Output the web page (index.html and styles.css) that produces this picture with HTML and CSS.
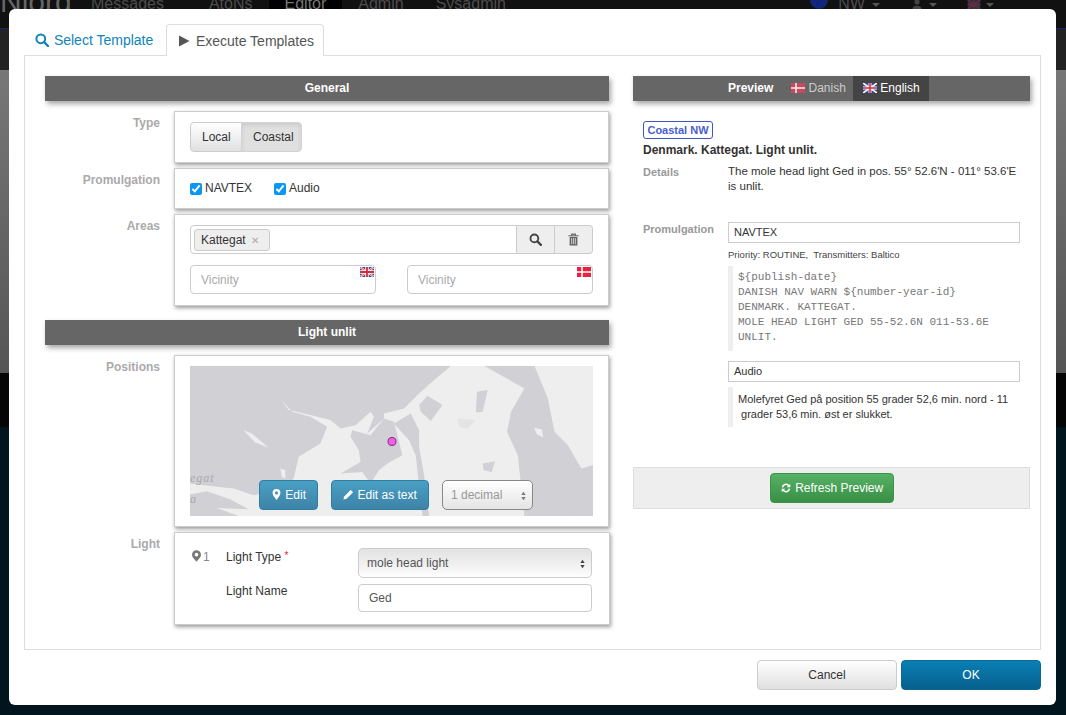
FILE: index.html
```html
<!DOCTYPE html>
<html lang="en">
<head>
    <meta charset="UTF-8">
    <title>Niord - Execute Templates</title>
    <link rel="stylesheet" href="styles.css">
</head>
<body>
    <div class="backdrop">
        <div class="topbar">
            <span class="brand">Niord</span>
            <span class="nav-item nav-messages">Messages</span>
            <span class="nav-item">AtoNs</span>
            <span class="nav-item nav-active">Editor</span>
            <span class="nav-item">Admin</span>
            <span class="nav-item">Sysadmin</span>
            <span class="nav-right">
                <i class="nav-dot"></i><span class="nav-item">NW</span><i class="caret"></i>
                <svg class="nav-user" viewBox="0 0 14 14"><circle cx="7" cy="3" r="4" fill="#444"/><path d="M0 14c0-4 3-5 7-5s7 1 7 5z" fill="#444"/></svg><i class="caret"></i>
                <svg class="nav-flag" viewBox="0 0 14 10"><rect width="14" height="10" fill="#2b2d4d"/><path d="M0 0l14 10M14 0L0 10M7 0v10M0 5h14" stroke="#5c3038" stroke-width="2"/></svg><i class="caret"></i>
            </span>
        </div>
        <div class="strip-dark"></div>
        <div class="strip-grey"></div>
        <div class="strip-black"></div>
    </div>

    <div class="modal">
        <div class="tabs">
            <a class="tab">
                <svg class="icon tab-icon" viewBox="0 0 14 14"><circle cx="5.8" cy="5.8" r="4.4" fill="none" stroke="#0f84b8" stroke-width="2"/><path d="M9 9l4 4" stroke="#0f84b8" stroke-width="2.4" stroke-linecap="round"/></svg>
                Select Template
            </a>
            <a class="tab tab-active">
                <svg class="icon tab-icon" viewBox="0 0 12 12"><path d="M1 0.5l10.5 5.5L1 11.5z" fill="#555"/></svg>
                Execute Templates
            </a>
        </div>

        <div class="tab-content">
            <div class="col-left">
                <div class="section-head">General</div>

                <div class="form-row row-type">
                    <label class="row-label">Type</label>
                    <div class="card">
                        <div class="btn-group">
                            <button class="btn btn-default">Local</button>
                            <button class="btn btn-default btn-pressed">Coastal</button>
                        </div>
                    </div>
                </div>

                <div class="form-row">
                    <label class="row-label">Promulgation</label>
                    <div class="card card-checks">
                        <label class="check"><input type="checkbox" checked>NAVTEX</label>
                        <label class="check"><input type="checkbox" checked>Audio</label>
                    </div>
                </div>

                <div class="form-row">
                    <label class="row-label row-label-areas">Areas</label>
                    <div class="card card-areas">
                        <div class="input-group">
                            <div class="tag-input"><span class="tag">Kattegat <span class="tag-x">&#10005;</span></span></div>
                            <span class="addon">
                                <svg class="icon" viewBox="0 0 14 14"><circle cx="5.8" cy="5.8" r="4.2" fill="none" stroke="#444" stroke-width="2"/><path d="M9 9l3.8 3.8" stroke="#444" stroke-width="2.4" stroke-linecap="round"/></svg>
                            </span>
                            <span class="addon">
                                <svg class="icon" viewBox="0 0 14 14"><path d="M1.5 3h11M5 3V1.2h4V3" fill="none" stroke="#666" stroke-width="1.2"/><path d="M2.8 4.2h8.4v9.3H2.8z" fill="#666"/><path d="M5 5.5v6.5M7 5.5v6.5M9 5.5v6.5" stroke="#eee" stroke-width="0.8"/></svg>
                            </span>
                        </div>
                        <div class="vicinity-row">
                            <div class="vicinity">
                                <input class="text-input" placeholder="Vicinity">
                                <svg class="corner-flag" viewBox="0 0 14 10"><rect width="14" height="10" fill="#2a4a9c"/><path d="M0 0l14 10M14 0L0 10" stroke="#fff" stroke-width="2"/><path d="M0 0l14 10M14 0L0 10" stroke="#d8283c" stroke-width="0.8"/><path d="M7 0v10M0 5h14" stroke="#fff" stroke-width="3.4"/><path d="M7 0v10M0 5h14" stroke="#d8283c" stroke-width="1.8"/></svg>
                            </div>
                            <div class="vicinity">
                                <input class="text-input" placeholder="Vicinity">
                                <svg class="corner-flag" viewBox="0 0 14 10"><rect width="14" height="10" fill="#ef1f3e"/><path d="M5 0v10M0 5h14" stroke="#fff" stroke-width="1.6"/></svg>
                            </div>
                        </div>
                    </div>
                </div>

                <div class="section-head section-light">Light unlit</div>

                <div class="form-row">
                    <label class="row-label row-label-pos">Positions</label>
                    <div class="card card-map">
                        <div class="map">
                            <svg class="map-svg" viewBox="60 33 1205 449" preserveAspectRatio="none">
                                <rect x="60" y="33" width="1205" height="449" fill="#d0d0d5"/>
                                <path fill="#eeeeef" d="M330 130 L355 165 L420 180 L480 195 L510 220 L555 210 L600 170 L610 185 L590 235 L640 190 L640 175 L700 160 L745 115 L790 75 L840 33 L940 33 L1060 100 L1020 170 L1008 230 L1040 300 L1060 482 L60 482 L60 385 L120 392 L190 400 L250 420 L345 395 L370 370 L385 305 L450 265 L470 215 L420 185 L365 170 Z"/>
                                <path fill="#eeeeef" d="M1090 33 L1265 33 L1265 330 L1230 340 L1190 270 L1150 230 L1130 130 Z"/>
                                <path fill="#eeeeef" d="M220 225 L245 235 L295 278 L255 262 Z"/>
                                <path fill="#eeeeef" d="M330 340 L345 345 L345 370 L335 365 Z"/>
                                <path fill="#eeeeef" d="M1088 218 L1112 222 L1116 246 L1098 238 Z"/>
                                <path fill="#d0d0d5" d="M545 225 L600 240 L640 190 L670 200 L680 240 L695 300 L650 325 L625 345 L600 385 L575 350 L510 355 L570 320 L565 285 L540 245 Z"/>
                                <path fill="#d0d0d5" d="M670 205 L720 175 L745 225 L745 275 L760 360 L775 482 L755 482 L735 300 L715 255 Z"/>
                                <path fill="#d0d0d5" d="M745 150 L770 122 L815 150 L780 198 L750 170 Z"/>
                                <path fill="#d0d0d5" d="M918 110 L950 105 L935 170 L915 172 Z"/>
                                <path fill="#d0d0d5" d="M935 325 L972 318 L962 350 L938 345 Z"/>
                                <path fill="#d0d0d5" d="M60 418 L110 408 L180 432 L235 462 L140 458 L205 482 L60 482 Z"/>
                                <path fill="#e4e4e6" d="M860 190 L915 195 L890 220 L865 215 Z"/>
                                <path fill="#d0d0d5" d="M1125 482 L1150 465 L1265 478 L1265 482 Z"/>
                                <circle cx="664" cy="259" r="12" fill="#f25fe4" stroke="#8e2a8c" stroke-width="3"/>
                            </svg>
                            <span class="map-label map-label-a">egat</span>
                            <span class="map-label map-label-b">a</span>
                            <div class="map-controls">
                                <button class="btn btn-blue btn-edit">
                                    <svg class="icon" viewBox="0 0 10 14"><path fill-rule="evenodd" d="M5 0a5 5 0 0 1 5 5c0 3-3 6-5 9-2-3-5-6-5-9a5 5 0 0 1 5-5zm0 3a2 2 0 1 0 0 4 2 2 0 0 0 0-4z" fill="#fff"/></svg>
                                    Edit
                                </button>
                                <button class="btn btn-blue btn-edit-text">
                                    <svg class="icon" viewBox="0 0 14 14"><path d="M0.5 13.5l1-4L9.8 1.2l3 3L4.5 12.5z" fill="#fff"/></svg>
                                    Edit as text
                                </button>
                                <div class="decimal-select">1 decimal<svg class="updown" viewBox="0 0 8 14"><path d="M4 1l3 4.5H1zM4 13l3-4.5H1z" fill="#777"/></svg></div>
                            </div>
                        </div>
                    </div>
                </div>

                <div class="form-row">
                    <label class="row-label row-label-light">Light</label>
                    <div class="card card-light">
                        <div class="light-index">
                            <svg class="icon pin-grey" viewBox="0 0 10 13"><path fill-rule="evenodd" d="M5 0a5 5 0 0 1 5 5c0 3-3 5-5 8-2-3-5-5-5-8a5 5 0 0 1 5-5zm0 3a2 2 0 1 0 0 4 2 2 0 0 0 0-4z" fill="#777"/></svg>1
                        </div>
                        <div class="light-fields">
                            <label class="field-label field-label-type">Light Type <span class="req">*</span></label>
                            <div class="select-like">mole head light<svg class="updown" viewBox="0 0 8 14"><path d="M4 1l3 4.5H1zM4 13l3-4.5H1z" fill="#444"/></svg></div>
                            <label class="field-label field-label-name">Light Name</label>
                            <input class="text-input text-input-name" value="Ged">
                        </div>
                    </div>
                </div>
            </div>

            <div class="col-right">
                <div class="section-head preview-head">
                    <span class="preview-title">Preview</span>
                    <span class="lang-tab">
                        <svg class="lang-flag" viewBox="0 0 14 10"><rect width="14" height="10" fill="#c8485c"/><path d="M5 0v10M0 5h14" stroke="#eee" stroke-width="1.6"/></svg>
                        Danish
                    </span>
                    <span class="lang-tab lang-active">
                        <svg class="lang-flag" viewBox="0 0 14 10"><rect width="14" height="10" fill="#2a4a9c"/><path d="M0 0l14 10M14 0L0 10" stroke="#fff" stroke-width="1.6"/><path d="M7 0v10M0 5h14" stroke="#fff" stroke-width="3"/><path d="M7 0v10M0 5h14" stroke="#d8283c" stroke-width="1.6"/></svg>
                        English
                    </span>
                </div>

                <div class="preview-body">
                    <span class="badge">Coastal NW</span>
                    <div class="msg-title">Denmark. Kattegat. Light unlit.</div>
                    <div class="msg-row msg-details">
                        <div class="msg-label">Details</div>
                        <div class="msg-text">The mole head light Ged in pos. 55° 52.6'N - 011° 53.6'E is unlit.</div>
                    </div>
                    <div class="msg-row">
                        <div class="msg-label msg-label-promo">Promulgation</div>
                        <div class="msg-text">
                            <div class="promo-box">NAVTEX</div>
                            <div class="promo-meta">Priority: ROUTINE,&nbsp; Transmitters: Baltico</div>
                            <pre class="promo-quote promo-mono">${publish-date}
DANISH NAV WARN ${number-year-id}
DENMARK. KATTEGAT.
MOLE HEAD LIGHT GED 55-52.6N 011-53.6E
UNLIT.</pre>
                            <div class="promo-box promo-box-audio">Audio</div>
                            <div class="promo-quote promo-audio">Molefyret Ged på position 55 grader 52,6 min. nord - 11<br>&nbsp;grader 53,6 min. øst er slukket.</div>
                        </div>
                    </div>
                </div>

                <div class="refresh-bar">
                    <button class="btn btn-green">
                        <svg class="icon" viewBox="0 0 14 14"><path d="M2 6a5 5 0 0 1 8.6-2.6L12 2v4.2H7.8l1.5-1.5A3.2 3.2 0 0 0 3.8 6.3zM12 8a5 5 0 0 1-8.6 2.6L2 12V7.8h4.2l-1.5 1.5a3.2 3.2 0 0 0 5.5-1.6z" fill="#fff"/></svg>
                        Refresh Preview
                    </button>
                </div>
            </div>
        </div>

        <div class="modal-footer">
            <button class="btn btn-default btn-footer">Cancel</button>
            <button class="btn btn-ok btn-footer">OK</button>
        </div>
    </div>
</body>
</html>
```

FILE: styles.css
```css
* {
    box-sizing: border-box;
}
html, body {
    margin: 0;
    height: 715px;
    overflow: hidden;
}
body {
    font-family: "Liberation Sans", Arial, sans-serif;
    font-size: 12px;
    line-height: 15px;
    color: #333;
    background-color: #00151e;
}

/* page behind the modal */
.backdrop {
    position: absolute;
    left: 0;
    top: 0;
    width: 100%;
}
.topbar {
    height: 29px;
    background-color: #111;
    border-bottom: 1px solid #14246e;
    display: flex;
    align-items: flex-start;
    font-size: 16px;
    line-height: 9px;
    overflow: hidden;
}
.brand {
    width: 91px;
    font-size: 30px;
    line-height: 3px;
    color: #666;
}
.nav-item {
    color: #4d4d4d;
    padding: 0 16px;
    line-height: 8px;
}
.nav-messages {
    padding-left: 0;
    padding-right: 29px;
}
.nav-active {
    background-color: #000;
    color: #777;
    height: 9px;
}
.nav-right {
    margin-left: auto;
    display: flex;
    align-items: flex-start;
    margin-right: 42px;
}
.nav-dot {
    width: 18px;
    height: 18px;
    margin-top: -9px;
    border-radius: 50%;
    background-color: #12277c;
}
.nav-right .nav-item {
    padding: 0 7px 0 10px;
}
.caret {
    width: 0;
    height: 0;
    margin: 3px 30px 0 0;
    border-left: 4px solid transparent;
    border-right: 4px solid transparent;
    border-top: 4px solid #555;
}
.nav-user {
    width: 14px;
    height: 9px;
    margin-right: 5px;
}
.nav-flag {
    width: 14px;
    height: 9px;
    margin-right: 5px;
}
.strip-dark {
    height: 41px;
    background-color: #222;
}
.strip-grey {
    height: 303px;
    background: linear-gradient(#777, #555);
}
.strip-black {
    height: 54px;
    background-color: #050505;
}

/* modal */
.modal {
    position: absolute;
    left: 9px;
    top: 9px;
    width: 1047px;
    height: 696px;
    background-color: #fff;
    border-radius: 6px;
    padding: 15px 15px 0;
}
.icon {
    width: 14px;
    height: 14px;
    vertical-align: -2px;
}
.tabs {
    display: flex;
    height: 32px;
    font-size: 14px;
    position: relative;
    z-index: 1;
}
.tab {
    display: block;
    padding: 8px 11px 0;
    line-height: 17px;
    color: #0f84b8;
    width: 142px;
    white-space: nowrap;
}
.tab-active {
    width: 158px;
    color: #555;
    background-color: #fff;
    border: 1px solid #ddd;
    border-bottom: none;
    border-radius: 4px 4px 0 0;
}
.tab-icon {
    margin-right: 1px;
}
.tab-active .tab-icon {
    width: 12px;
    height: 12px;
    vertical-align: -1px;
    margin-right: 2px;
}
.tab-content {
    margin-top: -1px;
    height: 595px;
    border: 1px solid #ddd;
    padding: 20px 10px 0 20px;
    display: grid;
    grid-template-columns: 564px 397px;
    column-gap: 24px;
}

.section-head {
    height: 25px;
    line-height: 25px;
    background-color: #666;
    color: #fff;
    font-weight: bold;
    text-align: center;
    box-shadow: 2px 3px 5px rgba(0, 0, 0, 0.35);
}
.section-light {
    margin-top: 14px;
}

.form-row {
    display: flex;
    margin-top: 5px;
}
.row-type {
    margin-top: 10px;
}
.row-label {
    width: 115px;
    margin-right: 14px;
    padding-top: 5px;
    text-align: right;
    font-weight: bold;
    color: #aaa;
    flex-shrink: 0;
}
.row-label-areas {
    padding-top: 5px;
}
.row-label-pos {
    margin-top: 0;
    padding-top: 5px;
}
.row-label-light {
    padding-top: 5px;
}
.section-light + .form-row {
    margin-top: 10px;
}
.card {
    flex: 1;
    background-color: #fff;
    border: 1px solid #ccc;
    box-shadow: 1px 2px 4px rgba(0, 0, 0, 0.4);
    padding: 10px 15px;
}

/* buttons */
.btn {
    font-family: inherit;
    font-size: 12px;
    line-height: 15px;
    height: 30px;
    border-radius: 4px;
    padding: 0 11px;
    cursor: pointer;
}
.btn-default {
    color: #333;
    border: 1px solid #ccc;
    background: linear-gradient(#fff, #e0e0e0);
}
.btn-group {
    display: flex;
}
.btn-group .btn {
    border-radius: 4px 0 0 4px;
    width: 52px;
}
.btn-group .btn-pressed {
    width: 61px;
    margin-left: -1px;
    border-radius: 0 4px 4px 0;
    background: #e0e0e0;
    border-color: #d4d4d4;
    box-shadow: inset 0 2px 4px rgba(0, 0, 0, 0.1);
}

/* checks */
.card-checks {
    display: flex;
    height: 41px;
    padding: 13px 15px 0;
}
.check {
    display: flex;
    align-items: center;
    height: 13px;
    width: 84px;
    color: #333;
}
.check input {
    margin: 0 3px 0 0;
    width: 12px;
    height: 12px;
    accent-color: #0a96f2;
}

/* areas */
.card-areas {
    height: 92px;
}
.input-group {
    display: flex;
    height: 29px;
}
.tag-input {
    flex: 1;
    border: 1px solid #ccc;
    border-radius: 4px 0 0 4px;
    padding: 3px;
}
.tag {
    display: inline-block;
    width: 76px;
    height: 22px;
    line-height: 20px;
    padding-left: 6px;
    border: 1px solid #ccc;
    border-radius: 3px;
    background-color: #eee;
    color: #333;
}
.tag-x {
    color: #aaa;
    font-size: 10px;
    margin-left: 2px;
}
.addon {
    width: 38px;
    background-color: #eee;
    border: 1px solid #ccc;
    border-left: none;
    display: flex;
    align-items: center;
    justify-content: center;
}
.addon:last-child {
    border-radius: 0 4px 4px 0;
}
.addon .icon {
    width: 13px;
    height: 13px;
}
.vicinity-row {
    display: flex;
    justify-content: space-between;
    margin-top: 11px;
}
.vicinity {
    position: relative;
    width: 186px;
}
.text-input {
    display: block;
    width: 100%;
    height: 29px;
    font-family: inherit;
    font-size: 12px;
    color: #555;
    border: 1px solid #ccc;
    border-radius: 4px;
    padding: 0 10px;
    outline: none;
}
.text-input::placeholder {
    color: #aaa;
}
.corner-flag {
    position: absolute;
    right: 2px;
    top: 2px;
    width: 14px;
    height: 10px;
}

/* map */
.card-map {
    height: 172px;
}
.map {
    position: relative;
    height: 150px;
    background-color: #d0d0d5;
    overflow: hidden;
}
.map-svg {
    display: block;
    width: 100%;
    height: 100%;
}
.map-label {
    position: absolute;
    left: 0;
    font-family: "Liberation Serif", serif;
    font-style: italic;
    font-size: 12px;
    color: #a9a9ad;
    letter-spacing: 1px;
}
.map-label-a {
    top: 105px;
}
.map-label-b {
    top: 126px;
}
.map-controls {
    position: absolute;
    left: 69px;
    bottom: 6px;
    display: flex;
    gap: 13px;
}
.btn-blue {
    color: #fff;
    border: 1px solid #2c7ea3;
    background: linear-gradient(#4a9fc4, #3e83a8);
    white-space: nowrap;
    padding: 0;
}
.btn-edit {
    width: 59px;
}
.btn-edit-text {
    width: 98px;
}
.btn-blue .icon {
    width: 11px;
    height: 11px;
    vertical-align: -1px;
}
.decimal-select {
    width: 91px;
    height: 30px;
    line-height: 28px;
    padding-left: 8px;
    border: 1px solid #888;
    border-radius: 5px;
    color: #999;
    background: linear-gradient(#fff, #e4e4e4);
    position: relative;
}
.updown {
    position: absolute;
    right: 5px;
    top: 10px;
    width: 7px;
    height: 10px;
}

/* light */
.card-light {
    height: 93px;
    padding: 15px 17px 0 17px;
    display: flex;
}
.light-index {
    width: 34px;
    color: #888;
    padding-top: 2px;
}
.pin-grey {
    width: 9px;
    height: 12px;
    margin-right: 2px;
    vertical-align: -1px;
}
.light-fields {
    flex: 1;
    display: grid;
    grid-template-columns: 132px 234px;
    grid-template-rows: 36px 28px;
    margin-top: 0;
}
.field-label {
    color: #333;
}
.field-label-type {
    padding-top: 0;
}
.field-label-name {
    padding-top: 0;
}
.req {
    color: #e8192c;
    font-size: 10px;
    vertical-align: 2px;
}
.select-like {
    position: relative;
    height: 30px;
    margin-top: 0;
    line-height: 28px;
    padding-left: 8px;
    color: #555;
    border: 1px solid #ccc;
    border-radius: 5px;
    background: linear-gradient(#e2e2e2, #f4f4f4 70%, #fff);
}
.text-input-name {
    height: 28px;
}

/* preview */
.preview-head {
    display: flex;
    justify-content: flex-start;
    padding-left: 95px;
    font-weight: normal;
}
.preview-title {
    font-weight: bold;
    width: 56px;
    text-align: left;
}
.lang-tab {
    padding: 0 7px;
    color: #ccc;
    width: 69px;
    white-space: nowrap;
}
.lang-active {
    color: #fff;
    background-color: #444;
    width: 76px;
    padding: 0 10px;
}
.lang-flag {
    width: 14px;
    height: 10px;
    vertical-align: -1px;
}
.preview-body {
    padding: 20px 10px 0;
    height: 366px;
}
.badge {
    display: inline-block;
    height: 18px;
    line-height: 16px;
    width: 70px;
    text-align: center;
    border: 1px solid #3f55c8;
    border-radius: 3px;
    font-size: 11px;
    font-weight: bold;
    color: #4a60cf;
}
.msg-title {
    font-weight: bold;
    margin-top: 4px;
}
.msg-row {
    display: flex;
    margin-top: 6px;
}
.msg-details {
    height: 52px;
}
.msg-label {
    width: 85px;
    font-weight: bold;
    color: #999;
    flex-shrink: 0;
    font-size: 11px;
    padding-top: 1px;
}
.msg-label-promo {
    padding-top: 0;
}
.msg-text {
    width: 292px;
    font-size: 11.5px;
}
.promo-box {
    height: 21px;
    line-height: 19px;
    padding-left: 5px;
    border: 1px solid #ccc;
    font-size: 11px;
    color: #333;
}
.promo-meta {
    font-size: 9.5px;
    margin-top: 4px;
    color: #444;
}
.promo-quote {
    border-left: 5px solid #eee;
    padding: 4px 0 3px 5px;
    margin: 4px 0 0;
    font-size: 11px;
    line-height: 15px;
}
.promo-mono {
    font-family: "Liberation Mono", "Courier New", monospace;
    color: #777;
    height: 85px;
}
.promo-box-audio {
    margin-top: 10px;
}
.promo-audio {
    margin-top: 5px;
    height: 40px;
    padding-top: 5px;
}
.refresh-bar {
    height: 42px;
    background-color: #eee;
    border: 1px solid #ddd;
    display: flex;
    justify-content: center;
    padding-top: 5px;
}
.btn-green {
    width: 124px;
    padding: 0;
    color: #fff;
    border: 1px solid #3a9347;
    background: linear-gradient(#56b165, #388f45);
}
.btn-green .icon {
    width: 12px;
    height: 12px;
}

/* footer */
.modal-footer {
    display: flex;
    justify-content: flex-end;
    gap: 4px;
    margin-top: 10px;
}
.btn-footer {
    width: 140px;
}
.btn-ok {
    color: #fff;
    border: 1px solid #0a6a96;
    background: linear-gradient(#0a7fb4, #065f8c);
}
```
